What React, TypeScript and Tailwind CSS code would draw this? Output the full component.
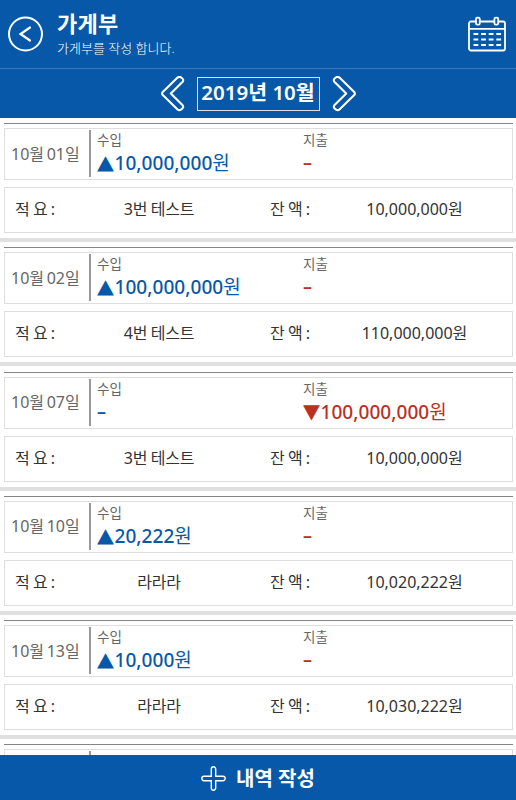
type Entry = {
  date: string;
  income?: string;
  expense?: string;
  memo: string;
  balance: string;
};

const entries: Entry[] = [
  { date: "10월 01일", income: "10,000,000", memo: "3번 테스트", balance: "10,000,000원" },
  { date: "10월 02일", income: "100,000,000", memo: "4번 테스트", balance: "110,000,000원" },
  { date: "10월 07일", expense: "100,000,000", memo: "3번 테스트", balance: "10,000,000원" },
  { date: "10월 10일", income: "20,222", memo: "라라라", balance: "10,020,222원" },
  { date: "10월 13일", income: "10,000", memo: "라라라", balance: "10,030,222원" },
];

function Amount({ value, mark }: { value?: string; mark: string }) {
  if (!value) return <span className="-mt-px block h-6 text-[18px] leading-6 font-semibold">–</span>;
  return (
    <span className="flex h-6 items-center text-[19px] leading-6 font-medium whitespace-nowrap">
      <span className="w-[17.5px] scale-y-90 font-['DejaVu_Sans'] text-[22px] leading-6">{mark}</span>
      <span className="tracking-[0.05px]">{value}</span>
      <span className="font-normal">원</span>
    </span>
  );
}

function Record({ entry }: { entry: Entry }) {
  return (
    <li className="h-[124.25px] pt-[5px]">
      <div className="ml-1 h-px w-[509px] bg-[#858585]" />
      <div className="mt-1 ml-1 flex h-[52px] w-[509px] border border-[#dedede] bg-white">
        <div className="flex w-[84px] items-center pb-px pl-[6px] text-[16px] whitespace-nowrap text-[#666] [word-spacing:-1.5px]">
          {entry.date}
        </div>
        <div className="mt-px h-[47px] w-[2px] bg-[#999]" />
        <div className="w-[206px] pl-[6px] text-[#0758a8]">
          <div className="mt-px h-[21px] text-[13.5px] leading-[20px] text-[#666]">수입</div>
          <Amount value={entry.income} mark="▲" />
        </div>
        <div className="pl-[6px] text-[#ba3023]">
          <div className="mt-px h-[21px] text-[13.5px] leading-[20px] text-[#666]">지출</div>
          <Amount value={entry.expense} mark="▼" />
        </div>
      </div>
      <div className="mt-[7px] ml-1 flex h-[46px] w-[509px] items-center border border-[#dedede] bg-white pb-[2px] text-[16px] whitespace-nowrap text-[#333]">
        <span className="w-[83px] pl-[10px] [word-spacing:-1px]">적 요 :</span>
        <span className="w-[142px] text-center tracking-[-0.2px] [word-spacing:-0.5px]">{entry.memo}</span>
        <span className="w-[104px] pl-[40px] [word-spacing:-1px]">잔 액 :</span>
        <span className="w-[161px] text-center">{entry.balance}</span>
      </div>
      <div className="mt-[5px] h-1 bg-[#e0e0e0]" />
    </li>
  );
}

function Chevron({ flip = false }: { flip?: boolean }) {
  return (
    <svg width="24" height="36" viewBox="0 0 24 36" className={flip ? "-scale-x-100" : ""} fill="none" stroke="white" strokeWidth="2.1" strokeLinejoin="round">
      <path d="M16.3 1.8 1.5 16.2Q.7 17.5 1.5 18.8L16.3 33.2Q18 34.9 20 33.7Q23.7 31.5 21.2 28.7L9.8 17.5 21.2 6.3Q23.7 3.5 20 1.3Q18 .1 16.3 1.8Z" />
    </svg>
  );
}

export default function App() {
  return (
    <div className="flex h-[800px] w-[516px] flex-col overflow-hidden bg-white font-['Noto_Sans','Noto_Sans_CJK_KR',sans-serif]">
      <header className="flex h-[68px] shrink-0 bg-[#0758a8] text-white">
        <button className="mt-4 ml-2 h-9 w-9" aria-label="뒤로">
          <svg width="36" height="36" viewBox="0 0 36 36" fill="none" stroke="white" strokeWidth="2">
            <circle cx="17.5" cy="18" r="16.5" />
            <path d="M22 11.5 12.5 18 22 24.5" strokeWidth="2.2" strokeLinecap="round" />
          </svg>
        </button>
        <div className="ml-[13px] w-[300px]">
          <h1 className="mt-[9px] h-[28px] text-[22px] leading-[28px] font-bold tracking-[0.2px]">가게부</h1>
          <p className="mt-px h-[20px] text-[13px] leading-[20px] font-light">가게부를 작성 합니다.</p>
        </div>
        <svg className="mt-4 ml-[110px]" width="40" height="38" viewBox="0 0 40 38" fill="none" stroke="white" strokeWidth="1.8">
          <rect x="2" y="5.5" width="36" height="29" rx="2" />
          <path d="M2 12.8h36" />
          <rect x="9" y="1.7" width="3.8" height="7" rx="1.4" fill="#0758a8" />
          <rect x="27.4" y="1.7" width="3.8" height="7" rx="1.4" fill="#0758a8" />
          <path d="M6.5 18h28M6.5 23.5h28M6.5 29h28" strokeWidth="1.8" strokeDasharray="4.8 2.8" />
        </svg>
      </header>
      <nav className="flex h-[50px] shrink-0 justify-center border-t border-[#3a79bb] bg-[#0758a8] pt-[7px] text-white">
        <Chevron />
        <div className="mt-px mr-3 ml-3 flex h-[34px] w-[123px] items-center justify-center border border-[#d5e2f0] pb-[3px] text-[20.5px] font-semibold whitespace-nowrap">
          2019년 10월
        </div>
        <Chevron flip />
      </nav>
      <ul className="h-[637px] shrink-0 overflow-hidden">
        {entries.map((entry) => (
          <Record key={entry.date} entry={entry} />
        ))}
        <li className="h-[16px] pt-[5px]">
          <div className="ml-1 h-px w-[509px] bg-[#858585]" />
          <div className="mt-1 ml-1 h-[6px] w-[509px] border border-b-0 border-[#dedede] pt-px pl-[84px]">
            <div className="h-1 w-[2px] bg-[#999]" />
          </div>
        </li>
      </ul>
      <button className="flex h-[45px] shrink-0 items-center bg-[#0758a8] pl-[201px] text-white">
        <svg className="mt-[2px]" width="25" height="25" viewBox="0 0 25 25" fill="none" stroke="white" strokeWidth="1.4">
          <path d="M10.3 10.3V3a2.2 2.2 0 0 1 4.4 0v7.3H22a2.2 2.2 0 0 1 0 4.4h-7.3V22a2.2 2.2 0 0 1-4.4 0v-7.3H3a2.2 2.2 0 0 1 0-4.4Z" />
        </svg>
        <span className="mt-[2px] ml-[10px] text-[20px] font-bold whitespace-nowrap">내역 작성</span>
      </button>
    </div>
  );
}
